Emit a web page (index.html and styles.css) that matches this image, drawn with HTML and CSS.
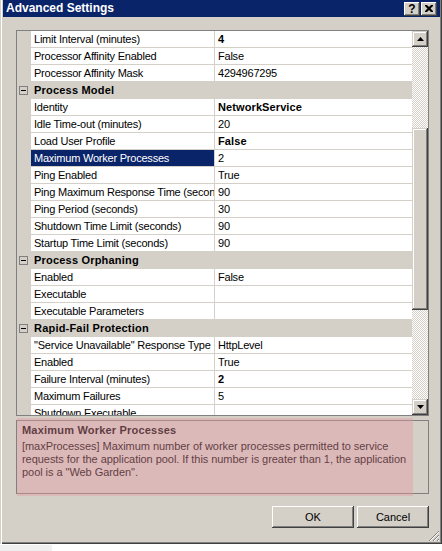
FILE: index.html
```html
<!DOCTYPE html>
<html>
<head>
<meta charset="utf-8">
<title>Advanced Settings</title>
<link rel="stylesheet" href="styles.css">
</head>
<body>
<div class="window">
  <div class="titlebar">
    <span class="title">Advanced Settings</span>
    <div class="caption-btns">
      <span class="cbtn help">?</span>
      <span class="cbtn close"><svg width="8" height="7" viewBox="0 0 8 7"><path d="M0 0h2l2 2 2-2h2v1l-2.5 2.5L8 6v1H6L4 5 2 7H0V6l2.5-2.5L0 1z" fill="#000"/></svg></span>
    </div>
  </div>
  <div class="content">
    <div class="grid">
      <div class="list">
        <div class="row"><div class="gut"></div><div class="name">Limit Interval (minutes)</div><div class="val b">4</div></div>
        <div class="row"><div class="gut"></div><div class="name">Processor Affinity Enabled</div><div class="val">False</div></div>
        <div class="row"><div class="gut"></div><div class="name">Processor Affinity Mask</div><div class="val">4294967295</div></div>
        <div class="row cat"><div class="gut"><svg class="box" width="9" height="9" viewBox="0 0 9 9"><rect x="0.5" y="0.5" width="8" height="8" fill="none" stroke="#808080"/><path d="M2 4.5h5" stroke="#000"/></svg></div><div class="name">Process Model</div><div class="val"></div></div>
        <div class="row"><div class="gut"></div><div class="name">Identity</div><div class="val b">NetworkService</div></div>
        <div class="row"><div class="gut"></div><div class="name">Idle Time-out (minutes)</div><div class="val">20</div></div>
        <div class="row"><div class="gut"></div><div class="name">Load User Profile</div><div class="val b">False</div></div>
        <div class="row sel"><div class="gut"></div><div class="name">Maximum Worker Processes</div><div class="val">2</div></div>
        <div class="row"><div class="gut"></div><div class="name">Ping Enabled</div><div class="val">True</div></div>
        <div class="row"><div class="gut"></div><div class="name">Ping Maximum Response Time (seconds)</div><div class="val">90</div></div>
        <div class="row"><div class="gut"></div><div class="name">Ping Period (seconds)</div><div class="val">30</div></div>
        <div class="row"><div class="gut"></div><div class="name">Shutdown Time Limit (seconds)</div><div class="val">90</div></div>
        <div class="row"><div class="gut"></div><div class="name">Startup Time Limit (seconds)</div><div class="val">90</div></div>
        <div class="row cat"><div class="gut"><svg class="box" width="9" height="9" viewBox="0 0 9 9"><rect x="0.5" y="0.5" width="8" height="8" fill="none" stroke="#808080"/><path d="M2 4.5h5" stroke="#000"/></svg></div><div class="name">Process Orphaning</div><div class="val"></div></div>
        <div class="row"><div class="gut"></div><div class="name">Enabled</div><div class="val">False</div></div>
        <div class="row"><div class="gut"></div><div class="name">Executable</div><div class="val"></div></div>
        <div class="row"><div class="gut"></div><div class="name">Executable Parameters</div><div class="val"></div></div>
        <div class="row cat"><div class="gut"><svg class="box" width="9" height="9" viewBox="0 0 9 9"><rect x="0.5" y="0.5" width="8" height="8" fill="none" stroke="#808080"/><path d="M2 4.5h5" stroke="#000"/></svg></div><div class="name">Rapid-Fail Protection</div><div class="val"></div></div>
        <div class="row"><div class="gut"></div><div class="name">"Service Unavailable" Response Type</div><div class="val">HttpLevel</div></div>
        <div class="row"><div class="gut"></div><div class="name">Enabled</div><div class="val">True</div></div>
        <div class="row"><div class="gut"></div><div class="name">Failure Interval (minutes)</div><div class="val b">2</div></div>
        <div class="row"><div class="gut"></div><div class="name">Maximum Failures</div><div class="val">5</div></div>
        <div class="row"><div class="gut"></div><div class="name">Shutdown Executable</div><div class="val"></div></div>
      </div>
      <div class="scrollbar">
        <div class="sbtn"><svg width="7" height="4" viewBox="0 0 7 4"><path d="M3.5 0L7 4H0z" fill="#000"/></svg></div>
        <div class="track t1"></div>
        <div class="thumb"></div>
        <div class="track t2"></div>
        <div class="sbtn"><svg width="7" height="4" viewBox="0 0 7 4"><path d="M0 0h7L3.5 4z" fill="#000"/></svg></div>
      </div>
    </div>
    <div class="desc">
      <div class="desc-title">Maximum Worker Processes</div>
      <div class="desc-text">[maxProcesses] Maximum number of worker processes permitted to service<br>requests for the application pool. If this number is greater than 1, the application<br>pool is a "Web Garden".</div>
    </div>
    <div class="buttons">
      <button class="btn ok">OK</button>
      <button class="btn cancel">Cancel</button>
    </div>
  </div>
  <div class="highlight"></div>
  <svg class="grip" width="12" height="12" viewBox="0 0 12 12">
    <path d="M11 1L1 11M11 5L5 11M11 9L9 11" stroke="#808080" stroke-width="1"/>
    <path d="M11 2L2 11M11 6L6 11M11 10L10 11" stroke="#ffffff" stroke-width="1"/>
  </svg>
</div>
<div class="below"></div>
</body>
</html>
```
FILE: styles.css
```css
* { box-sizing: border-box; }
html, body { margin: 0; padding: 0; background: #ffffff; }
body {
  font-family: "Liberation Sans", Arial, sans-serif;
  font-size: 11px;
  color: #000;
  width: 442px;
  height: 551px;
  overflow: hidden;
}
.window {
  position: relative;
  width: 442px;
  height: 544px;
  background: #d4d0c8;
  padding: 0 2px 2px 3px;
  box-shadow: inset 1px 0 #d4d0c8, inset 2px 0 #ffffff, inset -1px -1px #404040, inset -2px -2px #808080;
}
.titlebar {
  height: 17px;
  background: #0a246a;
  display: flex;
  align-items: center;
  justify-content: space-between;
  padding: 0 3px 0 3px;
}
.title {
  color: #fff;
  font-weight: bold;
  font-size: 12px;
  line-height: 17px;
}
.caption-btns { display: flex; gap: 1px; }
.cbtn {
  width: 16px;
  height: 14px;
  background: #d4d0c8;
  display: flex;
  align-items: center;
  justify-content: center;
  font-weight: bold;
  font-size: 12px;
  line-height: 14px;
  box-shadow: inset -1px -1px #404040, inset 1px 1px #ffffff, inset -2px -2px #808080;
}
.content {
  padding: 13px 11px 0 13px;
}
.grid {
  display: flex;
  height: 386px;
  border: 1px solid #808080;
  background: #fff;
}
.list {
  width: 395px;
  height: 384px;
  overflow: hidden;
}
.row {
  display: grid;
  grid-template-columns: 14px 184px 197px;
  height: 17px;
}
.gut { background: #d4d0c8; }
.name, .val {
  height: 17px;
  line-height: 16px;
  border-bottom: 1px solid #d4d0c8;
  white-space: nowrap;
  overflow: hidden;
  padding-left: 3px;
  letter-spacing: -0.22px;
}
.name { border-right: 1px solid #d4d0c8; }
.b { font-weight: bold; letter-spacing: 0.1px; }
.row.cat .name, .row.cat .val { background: #d4d0c8; }
.row.cat .name { font-weight: bold; letter-spacing: 0.2px; }
.row.sel .name { background: #0a246a; color: #fff; }
.box { display: block; margin: 4px 0 0 2px; }
.scrollbar {
  width: 16px;
  height: 384px;
  display: flex;
  flex-direction: column;
}
.sbtn {
  height: 16px;
  flex: none;
  background: #d4d0c8;
  display: flex;
  align-items: center;
  justify-content: center;
  box-shadow: inset -1px -1px #404040, inset 1px 1px #d4d0c8, inset -2px -2px #808080, inset 2px 2px #ffffff;
}
.track {
  background: repeating-conic-gradient(#ffffff 0 25%, #d4d0c8 0 50%) 0 0 / 2px 2px;
}
.t1 { height: 81px; }
.t2 { flex: 1; }
.thumb {
  height: 182px;
  background: #d4d0c8;
  box-shadow: inset -1px -1px #404040, inset 1px 1px #d4d0c8, inset -2px -2px #808080, inset 2px 2px #ffffff;
}
.desc {
  margin-top: 4px;
  height: 74px;
  border: 1px solid #808080;
  padding: 3px 5px;
}
.desc-title {
  font-weight: bold;
  line-height: 13px;
  margin-bottom: 3px;
  white-space: nowrap;
  letter-spacing: 0.2px;
}
.desc-text {
  line-height: 13px;
  white-space: nowrap;
  letter-spacing: -0.05px;
}
.buttons {
  display: flex;
  justify-content: flex-end;
  gap: 3px;
  margin-top: 12px;
}
.btn {
  height: 22px;
  background: #d4d0c8;
  border: none;
  font-family: "Liberation Sans", Arial, sans-serif;
  font-size: 11px;
  color: #000;
  padding: 0;
  box-shadow: inset -1px -1px #404040, inset 1px 1px #ffffff, inset -2px -2px #808080;
}
.ok { width: 82px; }
.cancel { width: 72px; }
.highlight {
  position: absolute;
  left: 17px;
  top: 418px;
  width: 396px;
  height: 78px;
  background: rgba(232, 150, 162, 0.4);
  pointer-events: none;
}
.grip {
  position: absolute;
  right: 2px;
  bottom: 2px;
}
.below {
  width: 52px;
  height: 6px;
  margin-top: 1px;
  background: #f0f0f0;
}
```
